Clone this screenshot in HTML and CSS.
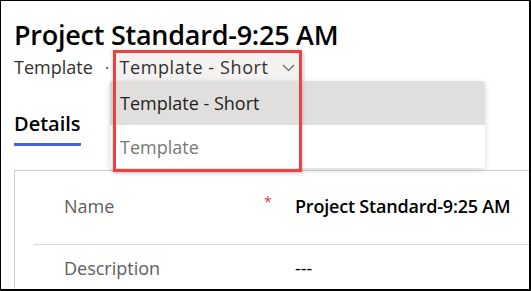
FILE: index.html
```html
<!DOCTYPE html>
<html>
<head>
  <title>Project Standard-9:25 AM</title>
  <link rel="stylesheet" href="styles.css">
</head>
<body>
  <div class="frame">
    <div class="header">
      <h1 class="title">Project Standard-9:25 AM</h1>
      <div class="subtitle">
        <span class="entity">Template</span>
        <span class="dot">&middot;</span>
        <button class="form-switch">
          Template - Short
          <svg class="chevron" width="13" height="8" viewBox="0 0 13 8">
            <path d="M1 1 L6.5 6.5 L12 1" fill="none" stroke="#605e5c" stroke-width="1.1"/>
          </svg>
        </button>
      </div>
    </div>

    <ul class="tabs">
      <li class="tab active">Details</li>
    </ul>

    <div class="card">
      <div class="field">
        <div class="field-label">Name</div>
        <div class="field-req">*</div>
        <div class="field-value strong">Project Standard-9:25 AM</div>
      </div>
      <div class="field">
        <div class="field-label">Description</div>
        <div class="field-req"></div>
        <div class="field-value">---</div>
      </div>
    </div>

    <ul class="menu">
      <li class="menu-item selected">Template - Short</li>
      <li class="menu-item muted">Template</li>
    </ul>
    <div class="callout"></div>
  </div>
</body>
</html>
```

FILE: styles.css
```css
body {
  margin: 0;
  padding: 0;
  background-color: white;
  font-family: "Open Sans", "Noto Sans", Arial, sans-serif;
  color: #323130;
}

.frame {
  position: relative;
  width: 531px;
  height: 291px;
  box-sizing: border-box;
  border-top: 1px solid black;
  border-left: 1px solid black;
  border-right: 2px solid black;
  border-bottom: 2px solid black;
  padding-left: 13px;
  overflow: hidden;
}

.header {
  padding-top: 16px;
}

.title {
  margin: 0;
  font-size: 27px;
  font-weight: 600;
  line-height: 36px;
  color: black;
  letter-spacing: -0.25px;
}

.subtitle {
  display: flex;
  align-items: center;
  height: 28px;
  font-size: 18px;
}

.dot {
  margin: 0 10px 0 12px;
  color: #605e5c;
}

.form-switch {
  display: flex;
  align-items: center;
  gap: 13px;
  height: 28px;
  border: none;
  background-color: #f3f2f1;
  margin-left: -6px;
  padding: 0 10px 0 6px;
  font-family: inherit;
  font-size: 18px;
  letter-spacing: 0.6px;
  color: #323130;
}

.chevron {
  margin-top: 2px;
}

.tabs {
  list-style-type: none;
  margin: 30px 0 0 0;
  padding: 0;
  display: flex;
}

.tab {
  font-size: 20px;
  font-weight: 600;
  line-height: 26px;
  color: black;
  padding-bottom: 6px;
  border-bottom: 3px solid #4262e8;
  border-radius: 1px;
}

.card {
  margin-top: 24px;
  border-top: 1px solid #cfcfcf;
  border-left: 1px solid #cfcfcf;
  padding-left: 19px;
}

.field {
  display: flex;
  align-items: center;
  height: 70px;
  padding-left: 30px;
  padding-bottom: 3px;
  font-size: 18px;
}

.field + .field {
  border-top: 1px solid #d8d8d8;
  height: 45px;
}

.field-label {
  width: 200px;
  color: #605e5c;
}

.field-req {
  width: 31px;
  color: #e23b3b;
  font-size: 14px;
  margin-bottom: 10px;
}

.field-value {
  color: black;
}

.field-value.strong {
  font-weight: 600;
  letter-spacing: -0.2px;
}

.menu {
  position: absolute;
  left: 109px;
  top: 80px;
  width: 375px;
  margin: 0;
  padding: 0;
  list-style-type: none;
  background-color: white;
  border-radius: 3px;
  box-shadow: 0 2px 6px rgba(0, 0, 0, 0.16);
  overflow: hidden;
}

.menu-item {
  height: 43px;
  display: flex;
  align-items: center;
  padding-left: 10px;
  font-size: 18px;
  color: #201f1e;
}

.menu-item.selected {
  background-color: #e1dfdd;
  height: 44px;
}

.menu-item.muted {
  color: #797775;
}

.callout {
  position: absolute;
  left: 112px;
  top: 49px;
  width: 183px;
  height: 116px;
  border: 3px solid #ee4242;
  box-shadow: 0 1px 4px rgba(0, 0, 0, 0.22);
}
```
